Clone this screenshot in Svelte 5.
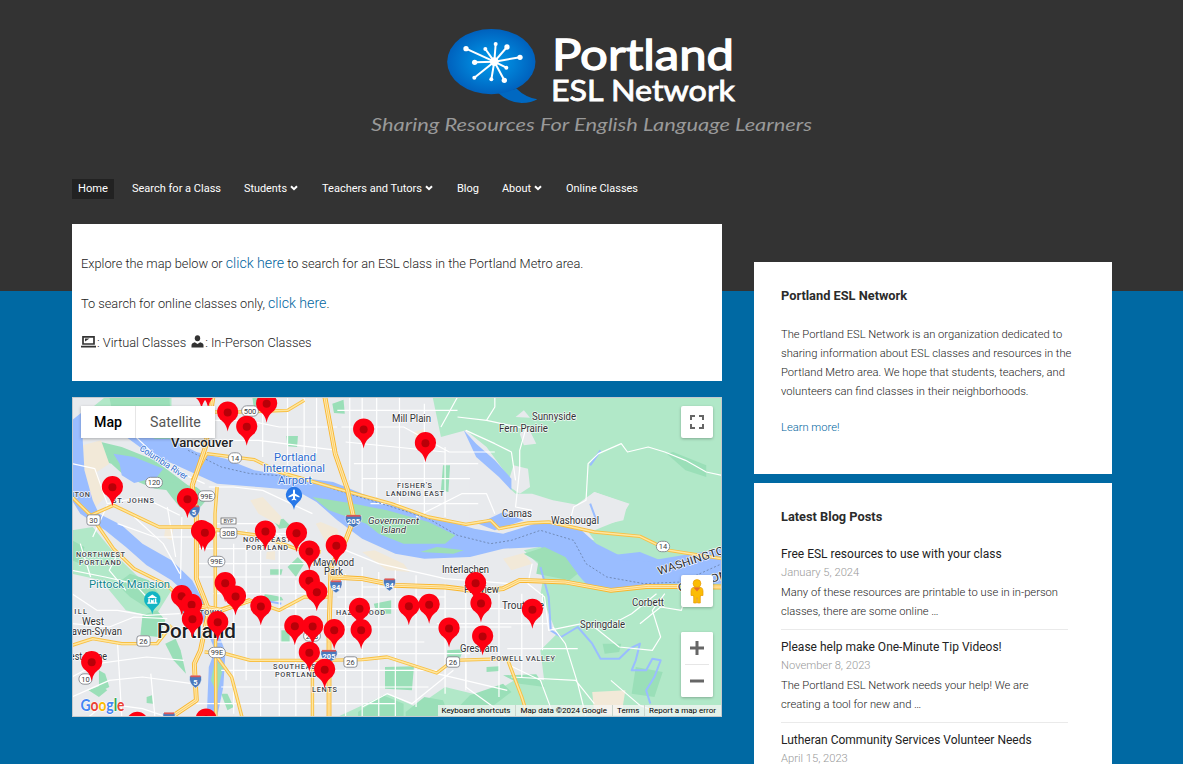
<script>
  const nav = [
    { label: 'Home', w: 30, active: true },
    { label: 'Search for a Class', w: 89 },
    { label: 'Students', w: 43, menu: true },
    { label: 'Teachers and Tutors', w: 100, menu: true },
    { label: 'Blog', w: 22 },
    { label: 'About', w: 29, menu: true },
    { label: 'Online Classes', w: 72 }
  ];
  const posts = [
    { title: 'Free ESL resources to use with your class', date: 'January 5, 2024', lines: ['Many of these resources are printable to use in in-person', 'classes, there are some online …'] },
    { title: 'Please help make One-Minute Tip Videos!', date: 'November 8, 2023', lines: ['The Portland ESL Network needs your help! We are', 'creating a tool for new and …'] },
    { title: 'Lutheran Community Services Volunteer Needs', date: 'April 15, 2023', lines: [] }
  ];
  const spokes = [[318,101,8],[376,102,6],[407,87,6],[441,96,8],[480,127,8],[439,158,6],[433,196,8],[394,193,6],[343,188,6],[344,142,8]];

  const dark = [
    'M70 135L120 150 200 190 285 270 270 285 200 275 130 240 95 200 70 190Z',
    'M90 0L235 0 240 125 200 130 160 100 100 60Z',
    'M210 250L300 270 330 300 300 345 260 330 240 300Z',
    'M0 430L30 450 20 500 0 490Z',
    'M108 560L140 530 185 550 215 600 190 640 140 600Z',
    'M170 655L205 640 225 670 210 720 165 715Z',
    'M225 740L250 725 262 760 275 830 245 790Z',
    'M435 0L460 5 455 28 438 28Z','M517 117L545 117 543 150 520 148Z',
    'M628 20L655 8 658 50 632 48Z','M895 205L912 205 908 285 890 280Z',
    'M478 517L508 517 505 533 478 533Z','M505 700L525 700 525 735 505 735Z',
    'M728 620L770 610 770 650 735 650Z','M755 810L825 808 820 880 755 875Z',
    'M905 760L945 757 930 800 905 790Z','M690 945L750 895 800 920 800 960 690 960Z',
    'M805 945L850 900 895 910 910 960 805 960Z','M925 940L960 895 1040 860 1060 885 980 960Z',
    'M1040 835L1120 832 1140 870 1080 860Z','M1435 170L1450 165 1530 205 1530 240 1480 220Z',
    'M1280 740L1325 740 1320 765 1285 770Z','M1360 810L1425 825 1405 900 1350 890Z',
    'M485 370L510 365 530 390 500 395Z','M65 820L80 830 90 870 65 885Z','M360 890L375 890 390 930 375 940Z',
    'M465 590L505 600 510 610 460 615Z','M1000 810L1030 808 1030 822 1000 825Z',
    'M520 510L545 480 560 500 540 540Z','M180 900L193 895 195 920 180 918Z','M40 880L70 865 85 880 65 900Z'
  ];
  const beige = [
    'M10 150L70 130 90 200 60 225 80 300 45 345 20 280Z','M430 310L460 300 505 360 500 385 450 350Z',
    'M588 380L600 375 640 395 650 440 610 430Z','M700 465L730 460 800 500 815 525 760 520Z',
    'M1040 485L1090 468 1110 500 1060 520Z','M825 105L850 95 850 160 830 150Z',
    'M1255 885L1335 880 1325 955 1260 950Z','M225 395L245 390 240 430 222 420Z','M470 465L490 462 490 490 468 485Z'
  ];
  const thin = [
    'M0 200L55 215 85 320 170 300 260 355','M85 325L50 420','M0 520L80 540 150 560 180 600','M0 590L60 640 110 640 180 655 260 650','M0 680L90 690 150 660 230 665',
    'M0 840L60 800 180 780 270 790','M0 900L90 850 170 840 290 860','M40 960L80 920 170 935 230 960','M110 740L120 960','M190 830L200 960',
    'M95 50L230 210 320 260','M110 380L200 420 290 420','M150 360L220 440 260 530','M110 470L90 520 130 580','M20 440L45 540',
    'M230 330L250 480M265 360L262 545M390 440V950M420 400V850M455 420V960M500 440V960M540 550V960M660 530V960M700 510V960M740 525V960M780 520V960M830 535V930M900 560V890M950 590V880M1030 590V900M1085 590V840M1135 590V760',
    'M300 410H560M300 455H570M300 500H600M300 540H560M340 590H620M350 635H1100M350 690H1060M350 735H850M360 820H880M360 870H860M300 920H780',
    'M700 570H960M640 600H900M640 770H960M880 680H1150M1050 755L1220 755M1055 805L1130 850 1160 950',
    'M330 70H420L500 90H640M350 130H450L640 160M460 30V180M520 0V210M560 0V230M590 0V170M670 0V250M700 0V290M735 0V300M790 0V330M850 20V360M900 150V360',
    'M640 40H930M650 90H800L910 165H1020M660 135L900 165M680 200H980M700 245H960M720 320H980M830 360L940 290 1000 290 1020 350',
    'M930 0L890 90M930 60L1000 70 1020 30V0M1000 70L1095 95 1080 160V215L1070 330 1110 340','M950 100L1020 140 1060 165 1070 250',
    'M1200 380L1210 330 1240 310 1245 200 1270 170 1325 140 1340 165 1390 150 1430 165 1480 190 1530 225 1568 235',
    'M1110 500L1100 560 1140 600 1150 700 1230 680 1260 690 1320 750 1400 760 1420 720 1400 640 1430 590',
    'M1290 690L1350 650 1410 590M1370 680L1420 630 1470 640 1480 600','M1160 690L1190 740 1220 860 1240 960M1300 850L1370 925 1420 950M1060 840L1215 850 1260 920',
    'M700 930L760 890 820 920 850 890 920 820M950 800V870L1050 960M880 830L1050 880M350 380H450L520 430','M620 440L740 500 900 545 1060 560','M330 270H390L460 280 580 350'
  ];
  const arterials = [
    'M325 170L440 188 500 225 640 275 770 320 860 360 950 382 1010 370 1030 395 1100 378 1150 375 1260 405 1370 418 1440 460 1568 485',
    'M0 300L45 355 100 455 150 515 230 565 290 640','M45 355L100 325 210 390 300 390 450 415 540 455 600 465','M0 745L50 725 120 740 205 740 240 685',
    'M320 765L370 770 430 790 600 790 700 788 760 780 880 828 920 790 1050 785 1085 900 1100 960','M350 270L345 350 347 960',
    'M350 780L385 840 410 960','M300 45L400 45 520 40 560 10M350 640L430 610 500 640 560 600 625 600','M580 800V960M325 170L290 250'
  ];
  const freeways = [
    'M340 0L322 150 290 265 300 350 300 545 330 640 310 760 295 800 300 910 240 960','M610 0L635 170 665 280 680 365 660 430 625 510 620 700 620 960',
    'M300 625L360 640 430 610','M625 540L700 545 780 565 900 570 980 582 1040 575 1080 550 1190 555 1300 580 1390 568 1568 570'
  ];
  const pins = [[312,-25],[328,-27],[469,18],[375,44],[421,87],[703,95],[852,136],[97,268],[278,304],[312,400],[466,401],[320,405],[541,406],[637,444],[572,461],[572,549],[369,556],[973,556],[590,583],[264,595],[394,596],[986,617],[288,621],[861,621],[812,625],[455,626],[693,633],[1110,636],[290,664],[351,673],[537,685],[580,686],[909,692],[632,697],[697,697],[990,716],[572,765],[47,793],[609,816],[323,965],[157,975]]
    .map(([x, y]) => [x / 2.412 + 0.2, y / 3 + 0.8]);
  // text, x, y, width, size, class
  const labels = [
    ['Vancouver', 99, 50, 62, 12, 'city'], ['Portland', 85, 241, 79, 20.5, 'big'],
    ['Mill Plain', 320, 25, 39, 10, 'town'], ['Sunnyside', 460, 22.5, 44, 10, 'town'], ['Fern Prairie', 427, 34.5, 49, 10, 'town'],
    ['Camas', 430, 119.5, 30, 10, 'town'], ['Washougal', 479, 127, 48, 10, 'town'], ['Interlachen', 370, 176, 47, 10, 'town'],
    ['Fairview', 392, 195.5, 35, 10, 'town'], ['Troutdale', 430, 212, 42, 10, 'town'], ['Gresham', 388, 255, 38, 10, 'town'],
    ['Corbett', 560, 209, 32, 10, 'town'], ['Springdale', 508, 231, 45, 10, 'town'], ['Maywood', 241, 169, 41, 10, 'town'], ['Park', 252, 178, 19, 10, 'town'],
    ['West', 10, 228, 22, 10, 'town'], ['Haven-Sylvan', -7, 238, 57, 10, 'town'], ['West Slope', -10, 263, 45, 10, 'town'],
    ['Government', 296, 126.5, 51, 9.5, 'town it'], ['Island', 309, 136, 25, 9.5, 'town it'],
    ['ST. JOHNS', 40, 106, 42, 7.3, 'area'], ['LINNTON', -16, 100, 34, 7.3, 'area'], ['NORTHWEST', 4, 160, 49, 7.3, 'area'], ['PORTLAND', 7, 167.5, 42, 7.3, 'area'],
    ['NORTHEAST', 171, 145, 48, 7.3, 'area'], ['PORTLAND', 174, 152.5, 42, 7.3, 'area'], ["FISHER'S", 325, 91, 35, 7.3, 'area'], ['LANDING EAST', 314, 98.5, 58, 7.3, 'area'],
    ['SOUTHEAST', 201, 272, 48, 7.3, 'area'], ['PORTLAND', 203, 279.5, 42, 7.3, 'area'], ['LENTS', 240, 295, 25, 7.3, 'area'], ['HAZELWOOD', 264, 218, 49, 7.3, 'area'],
    ['POWELL VALLEY', 419, 264, 64, 7.3, 'area'], ['OLD TOWN', 110, 218, 40, 7.3, 'area'], ['CEDAR MILL', -39, 217, 54, 7.3, 'area'],
    ['Portland', 202, 64, 42, 10.5, 'poi'], ['International', 191, 75, 62, 10.5, 'poi'], ['Airport', 206, 86.5, 34, 10.5, 'poi'], ['Pittock Mansion', 17, 191, 81, 11, 'teal']
  ];
  const shields = [['500',178,14,'o'],['14',163,61,'o'],['120',82,85.5,'o'],['99E',134.5,99,'o'],['30',21.5,123,'s'],['30B',156.5,136,'s'],['99E',144.5,164.5,'o'],['99E',145,255.5,'o'],['26',71.5,244,'s'],['10',13.5,282,'o'],['26',278.5,265,'s'],['26',381,265,'s'],['14',591,149.5,'o'],['213',240,239,'o'],['5',122,114,'i'],['5',123.5,284,'i'],['205',281.5,123.5,'i'],['205',257,258.5,'i'],['84',264,189,'i'],['84',317.5,187,'i'],['5',97,321,'i']];
</script>

<div class="page">
  <header>
    <svg class="logo" width="465" height="135" viewBox="0 0 465 135" role="img" aria-label="Portland ESL Network">
      <defs>
        <radialGradient id="bubble"><stop offset="0" stop-color="#0099e8" /><stop offset=".5" stop-color="#0080d6" /><stop offset="1" stop-color="#0061bd" /></radialGradient>
      </defs>
      <g transform="scale(.33333)">
        <path d="M414 233Q445 263 485 264Q515 264 532 253Q495 246 470 221Z" fill="#0068c1" />
        <ellipse cx="394" cy="140" rx="132.500" ry="98" fill="url(#bubble)" />
        {#each spokes as [x, y, r]}
          <path d="M403 140L{x} {y}" stroke="#fff" stroke-width="6" /><circle cx={x} cy={y} {r} fill="#fff" />
        {/each}
        <circle cx="403" cy="140" r="13" fill="#fff" />
      </g>
      <text class="name" x="192" y="55" font-size="43" textLength="182" lengthAdjust="spacingAndGlyphs">Portland</text>
      <text class="name sub" x="191" y="85.500" font-size="28.500" textLength="184" lengthAdjust="spacingAndGlyphs">ESL Network</text>
      <text class="tag" x="11" y="116" font-size="17.500" textLength="441" lengthAdjust="spacingAndGlyphs">Sharing Resources For English Language Learners</text>
    </svg>
    <nav>
      {#each nav as item}
        <a class:active={item.active}>
          <svg class="navtext" width={item.w} height="20"><text x="0" y="13" textLength={item.w} lengthAdjust="spacingAndGlyphs">{item.label}</text></svg>
          {#if item.menu}<svg class="caret" width="8" height="6" viewBox="0 0 8 6"><path d="M1 1.200L4 4.200L7 1.200" fill="none" stroke="#fff" stroke-width="2" /></svg>{/if}
        </a>
      {/each}
    </nav>
  </header>

  <div class="columns">
    <main>
      <section class="intro">
        <p>Explore the map below or <a>click here</a> to search for an ESL class in the Portland Metro area.</p>
        <p>To search for online classes only, <a>click here</a>.</p>
        <p class="legend">
          <svg width="15" height="13" viewBox="0 0 15 13"><path d="M2 1.800H13V9H2Z" fill="none" stroke="#333" stroke-width="1.700" /><path d="M4 3.500H8.500L4 6.500ZM0 10.700H15V12.500H0Z" fill="#333" /></svg><span>: Virtual Classes</span>
          <svg class="person" width="13" height="13" viewBox="0 0 13 13"><ellipse cx="6.500" cy="3.200" rx="2.700" ry="3" fill="#333" /><path d="M.5 12.500V9.800Q.7 8 3.800 7.200L6.500 9L9.200 7.200Q12.300 8 12.500 9.800V12.500Z" fill="#333" /></svg><span>: In-Person Classes</span>
        </p>
      </section>

      <section class="map">
        <svg class="canvas" width="650" height="320" viewBox="0 0 650 320">
          <defs>
            <g id="pin"><path d="M0 19C-1.500 12-3.500 10-7.500 7A10.600 10.600 0 1 1 7.500 7C3.500 10 1.500 12 0 19Z" fill="#fe0012" /><circle r="4" fill="#b80008" /></g>
          </defs>
          <rect width="650" height="320" fill="#e8eaed" />
          <g class="geo" transform="scale(.41454 .33333)">
            <g fill="#b1e8c8">
              <path d="M870 0H1568V960H1150L1130 760 1170 710 1130 590 1140 520 1090 460 1200 430 1250 405 1320 370 1345 320 1260 285 1215 325 1110 300 1060 290 1050 235 1000 150 950 100 890 120 880 60Z" />
              <path d="M0 80L80 0H240V130L160 100 60 70 0 130Z" />
              <path d="M0 400L50 390 110 480 160 540 240 580 200 660 130 640 70 550 0 530Z" />
              <path d="M640 960L760 890 830 930 900 870 1000 900 1080 840 1140 850 1160 960Z" />
            </g>
            <g fill="#e8eaed">
              <path d="M1065 205L1100 215 1105 270 1080 290 1050 265ZM1080 110L1100 90 1120 140 1090 145ZM1070 60L1090 40 1105 62Z" />
              <path d="M960 180L1000 210 1070 290 1110 290 1160 310 1225 325 1260 285 1340 320 1330 370 1240 395 1260 430 1210 420 1130 385 960 385Z" />
            </g>
            {#each dark as d}<path {d} fill="#9adfb8" />{/each}
            {#each beige as d}<path {d} fill="#f2e9d8" />{/each}
            <g fill="#9abdff">
              <path d="M0 70L30 40 60 55 25 110 30 220 50 310 65 350 120 385 170 440 240 490 290 550 320 620 345 680 370 765 365 870 350 960H325L330 810 345 760 315 670 285 600 240 550 180 505 130 450 80 400 20 350 0 310Z" />
              <path d="M80 55L130 80 200 125 240 125 300 165 370 185 440 220 540 240 630 255 720 300 820 345 900 370 970 395 1040 410 1130 375 1220 390 1265 440 1320 475 1400 490 1568 455V560L1420 560 1310 575 1240 560 1190 490 1130 450 1040 455 960 480 850 485 780 470 700 425 640 370 590 315 540 280 450 270 350 260 270 215 180 165 120 110Z" />
              <path d="M100 170L150 180 190 200 220 215 205 240 150 258 120 235 115 200Z" />
              <path d="M945 100L975 140 1020 190 1060 245 1060 280 1030 240 975 180ZM1040 345L1090 370 1020 400 980 380ZM1300 475L1370 465 1430 495 1330 490Z" />
            </g>
            <path d="M580 300L680 320 760 340 860 375 925 415 900 440 800 440 740 410 710 380 620 340Z" fill="#9ddfb6" />
            <path d="M840 465L880 450 945 460 920 470ZM1090 470L1140 450 1190 480 1220 530 1200 550 1120 530 1125 495ZM335 850L345 790 365 810 350 890Z" fill="#9ddfb6" />
            <g fill="none" stroke="#9abdff" stroke-width="2"><path d="M1130 510L1150 600 1155 700 1180 720 1220 690 1255 740 1275 785 1320 785 1345 755 1370 740 1360 790 1350 820 1385 820 1400 785 1420 790 1405 840 1385 880 1395 920" /><path d="M1250 320L1265 370M460 610L505 620M1250 205L1275 160" /></g>
            <g fill="none" stroke="#fff" stroke-width="1.200">{#each thin as d}<path {d} />{/each}</g>
            <path d="M280 160L360 210 430 230 550 240 640 280 760 325 860 365 930 415 1010 440 1060 430 1130 400 1210 430 1240 500 1290 540 1380 560 1470 555 1568 500" fill="none" stroke="#718bb8" stroke-dasharray="2 2" />
            <g fill="none" stroke="#f8c044" stroke-width="3.400">{#each arterials as d}<path {d} />{/each}</g>
            <g fill="none" stroke="#ffe69e" stroke-width="1.500">{#each arterials as d}<path {d} />{/each}</g>
            <g fill="none" stroke="#f9b52c" stroke-width="4.800">{#each freeways as d}<path {d} />{/each}</g>
            <g fill="none" stroke="#ffe9ac" stroke-width="3">{#each freeways as d}<path {d} />{/each}</g>
            <g fill="none" stroke="#fac65a" stroke-width=".8">{#each freeways as d}<path {d} />{/each}</g>
          </g>

          <g class="labels">
            {#each labels as [t, x, y, w, s, c]}<text class={c} {x} {y} font-size={s} textLength={w} lengthAdjust={c === 'area' ? 'spacing' : 'spacingAndGlyphs'}>{t}</text>{/each}
            <text class="poi" font-size="9" textLength="55" lengthAdjust="spacingAndGlyphs" transform="translate(67 53) rotate(33)">Columbia River</text>
            <text class="town" font-size="11" textLength="78" lengthAdjust="spacingAndGlyphs" transform="translate(587 178) rotate(-18)">WASHINGTON</text>
            <text class="town" font-size="11" textLength="52" lengthAdjust="spacingAndGlyphs" transform="translate(607 195) rotate(-16)">OREGON</text>
          </g>

          {#each shields as [t, x, y, kind]}
            <g transform="translate({x} {y})">
              {#if kind === 'i'}
                <path d="M-{t.length > 2 ? 8 : 6}-5H{t.length > 2 ? 8 : 6}Q{t.length > 2 ? 10 : 7} 3 0 7Q-{t.length > 2 ? 10 : 7} 3-{t.length > 2 ? 8 : 6}-5Z" fill="#4a79bd" stroke="#fff" stroke-width=".5" />
                <path d="M-{t.length > 2 ? 7 : 5}-4.700H{t.length > 2 ? 7 : 5}" stroke="#d95757" stroke-width="1.800" />
                <text class="shield light" y="3.700">{t}</text>
              {:else}
                <rect x={-(t.length * 1.8 + 3)} y="-5.200" width={t.length * 3.6 + 6} height="10.400" rx={kind === 'o' ? 5 : 2.500} fill="#fff" stroke="#757980" stroke-width=".8" />
                <text class="shield" y="2.700">{t}</text>
              {/if}
            </g>
          {/each}
          <g transform="translate(156.500 124)"><rect x="-7.500" y="-3" width="15" height="6" fill="#fff" stroke="#555" stroke-width=".7" /><text class="shield tiny" y="2">BYP</text></g>

          <g transform="translate(222 98)">
            <path d="M0 15C-1 9-4 8-6.500 5A8.200 8.200 0 1 1 6.500 5C4 8 1 9 0 15Z" fill="#2878e8" />
            <path d="M0-5.500C.8-5.500 1-4.800 1-4V-1.500L5.500 1.200V2.400L1 1V3.500L2.300 4.600V5.400L0 4.800L-2.300 5.400V4.600L-1 3.500V1L-5.500 2.400V1.200L-1-1.500V-4C-1-4.800-.8-5.500 0-5.500Z" fill="#fff" />
          </g>
          <g transform="translate(80.300 202.500)">
            <path d="M0 15C-1 9-4 8-6.500 5A8.200 8.200 0 1 1 6.500 5C4 8 1 9 0 15Z" fill="#12b5c4" />
            <path d="M-5-1.500L0-5L5-1.500ZM-4-1H-2.500V3H-4ZM2.500-1H4V3H2.500ZM-1.500 3V-.5L0 1L1.500-.5V3ZM-5 3H5V4.300H-5Z" fill="#fff" />
          </g>
          {#each pins as [x, y]}<use href="#pin" {x} {y} />{/each}

          <g class="google" font-size="17">
            <text x="8.500" y="314" textLength="44" lengthAdjust="spacingAndGlyphs"><tspan fill="#4285f4">G</tspan><tspan fill="#ea4335">o</tspan><tspan fill="#fbbc04">o</tspan><tspan fill="#4285f4">g</tspan><tspan fill="#34a853">l</tspan><tspan fill="#ea4335">e</tspan></text>
          </g>
          <rect x="366" y="308" width="283" height="11" fill="#f5f5f5" opacity=".75" />
          <g class="terms" font-size="8">
            <text x="369.500" y="316" textLength="69">Keyboard shortcuts</text><text x="448.500" y="316" textLength="86.500">Map data ©2024 Google</text><text x="545" y="316" textLength="22.500">Terms</text><text x="577" y="316" textLength="67">Report a map error</text>
            <path d="M443.500 308V319M540.500 308V319M572.500 308V319" stroke="#c9d5cc" />
          </g>
          <rect x=".5" y=".5" width="649" height="319" fill="none" stroke="#c5c9cd" />
        </svg>

        <div class="types"><button class="on">Map</button><button>Satellite</button></div>
        <button class="ctl full" aria-label="Toggle fullscreen view"><svg width="14" height="14" viewBox="0 0 14 14"><path d="M1 5V1H5M9 1H13V5M13 9V13H9M5 13H1V9" fill="none" stroke="#666" stroke-width="2" /></svg></button>
        <button class="ctl peg" aria-label="Street View"><svg width="14" height="25" viewBox="0 0 14 25"><path d="M3 8.500H11Q13 9 13 12V16.500H11V17H10.300V24H7.500V19H6.500V24H3.700V17H3V16.500H1V12Q1 9 3 8.500Z" fill="#fbbc04" stroke="#e79b08" stroke-width=".7" /><circle cx="7" cy="4.500" r="3.900" fill="#fbbc04" stroke="#e79b08" stroke-width=".7" /><path d="M3.500 8.500H10.500L7 12.500Z" fill="#e66c2c" /></svg></button>
        <div class="ctl zoom"><button aria-label="Zoom in"><svg width="14" height="14" viewBox="0 0 14 14"><path d="M7 0V14M0 7H14" stroke="#666" stroke-width="3" /></svg></button><i></i><button aria-label="Zoom out"><svg width="14" height="14" viewBox="0 0 14 14"><path d="M0 7H14" stroke="#666" stroke-width="3" /></svg></button></div>
      </section>
    </main>

    <aside>
      <section class="widget about">
        <h2>Portland ESL Network</h2>
        <p>The Portland ESL Network is an organization dedicated to<br />sharing information about ESL classes and resources in the<br />Portland Metro area. We hope that students, teachers, and<br />volunteers can find classes in their neighborhoods.</p>
        <p class="more"><a>Learn more!</a></p>
      </section>
      <section class="widget blog">
        <h2>Latest Blog Posts</h2>
        {#each posts as post}
          <article>
            <h3>{post.title}</h3>
            <time>{post.date}</time>
            <p>{#each post.lines as line}{line}<br />{/each}</p>
          </article>
        {/each}
      </section>
    </aside>
  </div>
</div>

<style>
  :global(body) { margin: 0; overflow: hidden; }
  .page { box-sizing: border-box; width: 1183px; height: 764px; overflow: hidden; background: linear-gradient(#333 291px, #0069a3 291px); font-family: Roboto, sans-serif; color: #222; font-weight: 300; }
  header { height: 224px; }
  .logo { display: block; margin-left: 360px; padding-top: 15px; }
  .name { font-family: Lato, sans-serif; font-weight: 400; fill: #fff; stroke: #fff; stroke-width: 1.300px; }
  .sub { stroke-width: .8px; }
  .tag { font-family: Lato, sans-serif; font-style: italic; font-weight: 400; fill: #999; }
  nav { display: flex; gap: 11.650px; margin: 29px 0 0 72px; }
  nav a { display: flex; align-items: center; height: 20px; padding: 0 6px; color: #fff; }
  nav a.active { background: #222; }
  .navtext { display: block; overflow: visible; font-size: 11.500px; font-weight: 400; fill: #fff; }
  .caret { margin: 0 0 2px 3px; }
  .columns { display: flex; align-items: flex-start; gap: 32px; padding-left: 72px; }
  main { width: 650px; display: flex; flex-direction: column; gap: 16px; }
  .intro { box-sizing: border-box; height: 157px; padding: 29px 9px 0; background: #fff; font-size: 12.800px; letter-spacing: -.012px; white-space: nowrap; }
  .intro p { margin: 0 0 19px; height: 20.500px; line-height: 20.500px; }
  .intro a { font-size: 14.200px; }
  a { color: #0065a0; }
  .intro .legend { display: flex; align-items: center; margin-top: 20px; }
  .legend svg { margin-bottom: 3px; margin-right: 1px; }
  .legend .person { margin-left: 5px; margin-right: 1px; }
  .map { position: relative; height: 320px; }
  .canvas { display: block; }
  .geo path { vector-effect: non-scaling-stroke; stroke-linejoin: round; }
  .labels text { paint-order: stroke; stroke: #fff; stroke-width: 1.500px; stroke-opacity: .85; stroke-linejoin: round; font-weight: 400; }
  .town { fill: #303134; }
  .it { font-style: italic; }
  .labels .city { fill: #202124; font-weight: 500; }
  .labels .big { fill: #202124; font-weight: 500; stroke-width: 2px; }
  .labels .area { fill: #3f444b; font-weight: 500; }
  .poi { fill: #2a6ad0; }
  .teal { fill: #12858f; }
  .shield { font-size: 7.500px; font-weight: 400; text-anchor: middle; fill: #3c4043; }
  .shield.light { fill: #fff; font-weight: 700; }
  .shield.tiny { font-size: 5.500px; }
  .google { font-family: Lato, sans-serif; font-weight: 700; paint-order: stroke; stroke: #fff; stroke-width: 1px; }
  .terms text { fill: #000; font-weight: 400; }
  button { border: 0; padding: 0; background: #fff; font-family: inherit; }
  .types { position: absolute; left: 9px; top: 9px; display: flex; height: 32px; box-shadow: 0 1px 3px #0004; }
  .types button { width: 79px; font-size: 14.200px; color: #565656; font-weight: 400; }
  .types .on { width: 55px; font-weight: 500; color: #000; border-right: 1px solid #e6e6e6; }
  .ctl { position: absolute; right: 9px; width: 32px; height: 32px; background: #fff; border-radius: 2px; box-shadow: 0 1px 3px #0004; display: flex; align-items: center; justify-content: center; }
  .full { top: 9px; }
  .peg { top: 178px; }
  .zoom { top: 235px; height: 65px; flex-direction: column; }
  .zoom button { height: 32px; width: 32px; display: grid; place-items: center; border-radius: 2px; }
  .zoom i { width: 24px; height: 1px; background: #e6e6e6; }
  aside { width: 358px; padding-top: 38px; }
  .widget { box-sizing: border-box; background: #fff; padding: 25px 27px; white-space: nowrap; }
  .about { height: 212px; margin-bottom: 9px; }
  .blog { height: 400px; }
  h2 { margin: 0; font-size: 12.800px; line-height: 18px; font-weight: 700; color: #2b2b2b; }
  .widget p { margin: 0; font-size: 11.200px; line-height: 19.100px; }
  .about h2 + p { margin-top: 20px; }
  .widget .more { margin-top: 17px; }
  .blog h2 { margin-bottom: 19px; }
  article { width: 287px; height: 84px; margin-bottom: 8px; border-bottom: 1px solid #eaeaea; }
  h3 { margin: 0; font-size: 12px; line-height: 19px; font-weight: 400; color: #222; }
  time { display: block; font-size: 11.200px; line-height: 18.500px; color: #999; }
</style>
